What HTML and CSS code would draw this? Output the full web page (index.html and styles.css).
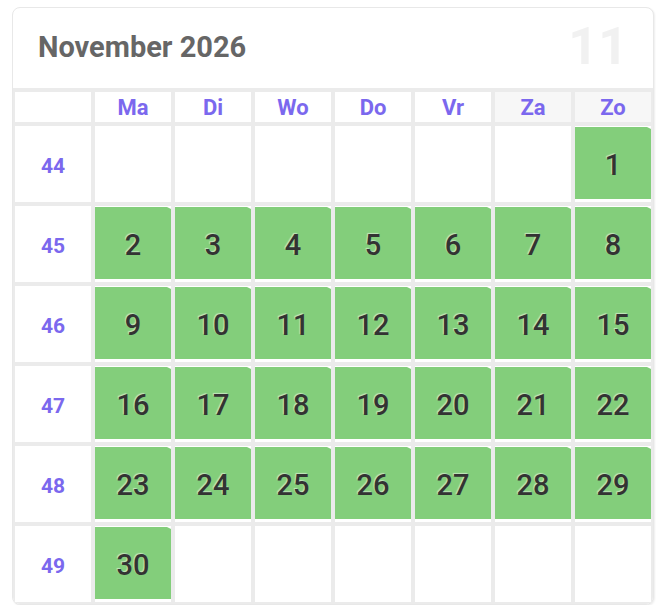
FILE: index.html
```html
<!DOCTYPE html>
<html lang="nl">
<head>
<meta charset="utf-8">
<title>November 2026</title>
<link rel="stylesheet" href="styles.css">
</head>
<body>
<div class="page">
  <div class="card">
    <div class="card-head">
      <h1 class="title">November 2026</h1>
      <span class="month-no">11</span>
    </div>
    <table class="cal">
      <thead>
        <tr>
          <th class="wk-head"></th>
          <th class="dow">Ma</th>
          <th class="dow">Di</th>
          <th class="dow">Wo</th>
          <th class="dow">Do</th>
          <th class="dow">Vr</th>
          <th class="dow weekend">Za</th>
          <th class="dow weekend">Zo</th>
        </tr>
      </thead>
      <tbody>
        <tr>
          <td class="wk">44</td>
          <td class="day"></td><td class="day"></td><td class="day"></td><td class="day"></td><td class="day"></td><td class="day"></td>
          <td class="day"><div class="on">1</div></td>
        </tr>
        <tr>
          <td class="wk">45</td>
          <td class="day"><div class="on">2</div></td>
          <td class="day"><div class="on">3</div></td>
          <td class="day"><div class="on">4</div></td>
          <td class="day"><div class="on">5</div></td>
          <td class="day"><div class="on">6</div></td>
          <td class="day"><div class="on">7</div></td>
          <td class="day"><div class="on">8</div></td>
        </tr>
        <tr>
          <td class="wk">46</td>
          <td class="day"><div class="on">9</div></td>
          <td class="day"><div class="on">10</div></td>
          <td class="day"><div class="on">11</div></td>
          <td class="day"><div class="on">12</div></td>
          <td class="day"><div class="on">13</div></td>
          <td class="day"><div class="on">14</div></td>
          <td class="day"><div class="on">15</div></td>
        </tr>
        <tr>
          <td class="wk">47</td>
          <td class="day"><div class="on">16</div></td>
          <td class="day"><div class="on">17</div></td>
          <td class="day"><div class="on">18</div></td>
          <td class="day"><div class="on">19</div></td>
          <td class="day"><div class="on">20</div></td>
          <td class="day"><div class="on">21</div></td>
          <td class="day"><div class="on">22</div></td>
        </tr>
        <tr>
          <td class="wk">48</td>
          <td class="day"><div class="on">23</div></td>
          <td class="day"><div class="on">24</div></td>
          <td class="day"><div class="on">25</div></td>
          <td class="day"><div class="on">26</div></td>
          <td class="day"><div class="on">27</div></td>
          <td class="day"><div class="on">28</div></td>
          <td class="day"><div class="on">29</div></td>
        </tr>
        <tr>
          <td class="wk">49</td>
          <td class="day"><div class="on">30</div></td>
          <td class="day"></td><td class="day"></td><td class="day"></td><td class="day"></td><td class="day"></td><td class="day"></td>
        </tr>
      </tbody>
    </table>
  </div>
</div>
</body>
</html>
```

FILE: styles.css
```css
html, body {
  margin: 0;
  padding: 0;
  background: #fff;
}

body {
  font-family: Roboto, "Liberation Sans", Arial, sans-serif;
}

.page {
  padding: 7px 0 0 12px;
}

.card {
  width: 640px;
  border: 1px solid #e8e8e8;
  border-radius: 8px;
  box-shadow: 1px 1px 2px rgba(0, 0, 0, 0.07);
  background: #fff;
  overflow: hidden;
}

.card-head {
  display: flex;
  align-items: center;
  justify-content: space-between;
  padding: 0 25px 0 25px;
  box-sizing: border-box;
  height: 82px;
  border-bottom: 2px solid #ebebeb;
}

.title {
  margin: 0;
  font-size: 29px;
  font-weight: 700;
  color: #666;
  padding-bottom: 2px;
}

.month-no {
  font-size: 52px;
  font-weight: 700;
  color: #f1f1f1;
  line-height: 1;
  padding-bottom: 2px;
}

.cal {
  border-collapse: separate;
  border-spacing: 0;
  width: 640px;
  table-layout: fixed;
}

.cal th,
.cal td {
  border: 2px solid #ebebeb;
  padding: 0;
  text-align: center;
  vertical-align: middle;
}

.cal th {
  height: 30px;
  font-size: 22px;
  font-weight: 700;
  color: #7b68ee;
}

.cal th.weekend {
  background: #f7f7f7;
}

.cal td {
  height: 76px;
}

.cal td.wk {
  height: 72px;
  padding-top: 4px;
  font-size: 21px;
  font-weight: 700;
  color: #7b68ee;
  line-height: 1;
}

.cal td.day {
  vertical-align: top;
}

.on {
  position: relative;
  box-sizing: border-box;
  margin-top: 1px;
  height: 72px;
  padding-top: 3px;
  background: #83ce7b;
  display: flex;
  align-items: center;
  justify-content: center;
  font-size: 29px;
  font-weight: 500;
  color: #333;
  text-shadow: -1px -1px 1px rgba(255, 255, 255, 0.5);
}

.on::after {
  content: "";
  position: absolute;
  top: 0;
  right: 0;
  width: 0;
  height: 0;
  border-top: 2px solid #fff;
  border-left: 4px solid transparent;
}
```
